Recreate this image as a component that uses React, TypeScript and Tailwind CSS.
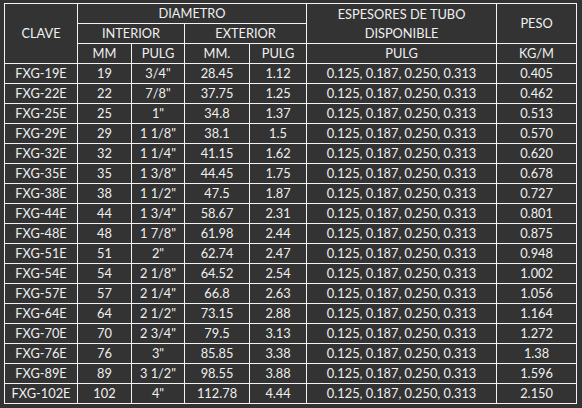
const rows: [string, string, string, string, string, string][] = [
  ["FXG-19E", "19", "3/4\"", "28.45", "1.12", "0.405"],
  ["FXG-22E", "22", "7/8\"", "37.75", "1.25", "0.462"],
  ["FXG-25E", "25", "1\"", "34.8", "1.37", "0.513"],
  ["FXG-29E", "29", "1 1/8\"", "38.1", "1.5", "0.570"],
  ["FXG-32E", "32", "1 1/4\"", "41.15", "1.62", "0.620"],
  ["FXG-35E", "35", "1 3/8\"", "44.45", "1.75", "0.678"],
  ["FXG-38E", "38", "1 1/2\"", "47.5", "1.87", "0.727"],
  ["FXG-44E", "44", "1 3/4\"", "58.67", "2.31", "0.801"],
  ["FXG-48E", "48", "1 7/8\"", "61.98", "2.44", "0.875"],
  ["FXG-51E", "51", "2\"", "62.74", "2.47", "0.948"],
  ["FXG-54E", "54", "2 1/8\"", "64.52", "2.54", "1.002"],
  ["FXG-57E", "57", "2 1/4\"", "66.8", "2.63", "1.056"],
  ["FXG-64E", "64", "2 1/2\"", "73.15", "2.88", "1.164"],
  ["FXG-70E", "70", "2 3/4\"", "79.5", "3.13", "1.272"],
  ["FXG-76E", "76", "3\"", "85.85", "3.38", "1.38"],
  ["FXG-89E", "89", "3 1/2\"", "98.55", "3.88", "1.596"],
  ["FXG-102E", "102", "4\"", "112.78", "4.44", "2.150"],
]

const espesores = "0.125, 0.187, 0.250, 0.313"

// celdas con borde blanco, texto centrado
const cell = "border border-[#f2f2f2] p-0 text-center align-middle leading-[19px]"

export default function App() {
  return (
    <div
      className="w-[582px] h-[408px] bg-[#333333] pt-[3px] pl-[4px] text-[#f0f0f0] text-[12.8px]"
      style={{ fontFamily: "Lato, 'Open Sans', sans-serif" }}
    >
      <table className="table-fixed border-collapse w-[572px]">
        <colgroup>
          <col className="w-[73px]" />
          <col className="w-[54px]" />
          <col className="w-[53px]" />
          <col className="w-[65px]" />
          <col className="w-[57px]" />
          <col className="w-[190px]" />
          <col className="w-[80px]" />
        </colgroup>
        <thead>
          <tr className="h-[20px]">
            <th rowSpan={3} className={`${cell} font-normal`}>CLAVE</th>
            <th colSpan={4} className={`${cell} font-normal`}>DIAMETRO</th>
            <th rowSpan={2} className={`${cell} font-normal`}>
              ESPESORES DE TUBO
              <br />
              DISPONIBLE
            </th>
            <th rowSpan={2} className={`${cell} font-normal`}>PESO</th>
          </tr>
          <tr className="h-[20px]">
            <th colSpan={2} className={`${cell} font-normal`}>INTERIOR</th>
            <th colSpan={2} className={`${cell} font-normal`}>EXTERIOR</th>
          </tr>
          <tr className="h-[20px]">
            <th className={`${cell} font-normal`}>MM</th>
            <th className={`${cell} font-normal`}>PULG</th>
            <th className={`${cell} font-normal`}>MM.</th>
            <th className={`${cell} font-normal`}>PULG</th>
            <th className={`${cell} font-normal`}>PULG</th>
            <th className={`${cell} font-normal`}>KG/M</th>
          </tr>
        </thead>
        <tbody>
          {rows.map((r) => (
            <tr key={r[0]} className="h-[20px]">
              <td className={cell}>{r[0]}</td>
              <td className={cell}>{r[1]}</td>
              <td className={cell}>{r[2]}</td>
              <td className={cell}>{r[3]}</td>
              <td className={cell}>{r[4]}</td>
              <td className={cell}>{espesores}</td>
              <td className={cell}>{r[5]}</td>
            </tr>
          ))}
        </tbody>
      </table>
    </div>
  )
}
